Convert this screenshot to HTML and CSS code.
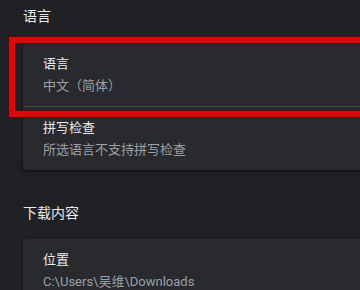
FILE: index.html
```html
<!DOCTYPE html>
<html lang="zh-CN">
<head>
<meta charset="utf-8">
<link rel="stylesheet" href="styles.css">
</head>
<body>
<div class="page">
  <h2 class="section-title first">语言</h2>
  <div class="card">
    <div class="row">
      <div class="primary">语言</div>
      <div class="secondary">中文（简体）</div>
    </div>
    <div class="row bordered">
      <div class="primary">拼写检查</div>
      <div class="secondary">所选语言不支持拼写检查</div>
    </div>
  </div>
  <h2 class="section-title">下载内容</h2>
  <div class="card">
    <div class="row">
      <div class="primary">位置</div>
      <div class="secondary">C:\Users\吴维\Downloads</div>
    </div>
  </div>
  <div class="highlight"></div>
</div>
</body>
</html>
```
FILE: styles.css
```css
html, body {
  margin: 0;
  padding: 0;
  background: #202124;
  overflow: hidden;
}
.page {
  position: relative;
  width: 360px;
  height: 290px;
  overflow: hidden;
  font-family: Roboto, "Noto Sans CJK SC", sans-serif;
  color: #e8eaed;
}
.section-title {
  margin: 0;
  padding: 33px 0 16px 23px;
  font-size: 14px;
  line-height: 20px;
  font-weight: 400;
  color: #e8eaed;
}
.section-title.first {
  padding-top: 6px;
  padding-bottom: 17px;
}
.card {
  margin-left: 23px;
  width: 420px;
  background: #292a2d;
  border-radius: 4px;
  box-shadow: 0 1px 2px rgba(0,0,0,.45), 0 2px 4px 1px rgba(0,0,0,.2);
}
.row {
  padding: 11px 20px 10px;
  height: 42px;
  display: flex;
  flex-direction: column;
  gap: 2px;
}
.row.bordered {
  border-top: 1px solid #3d4a4f;
}
.primary {
  font-size: 13px;
  line-height: 20px;
  color: #e8eaed;
}
.secondary {
  font-size: 13px;
  line-height: 20px;
  color: #9aa0a6;
}
.highlight {
  position: absolute;
  left: 9px;
  top: 37px;
  width: 400px;
  height: 68px;
  border: 6px solid #d80a0c;
  box-shadow: 0 0 0 1px rgba(110,0,0,.7), inset 0 0 0 1px rgba(110,0,0,.7);
}
```
